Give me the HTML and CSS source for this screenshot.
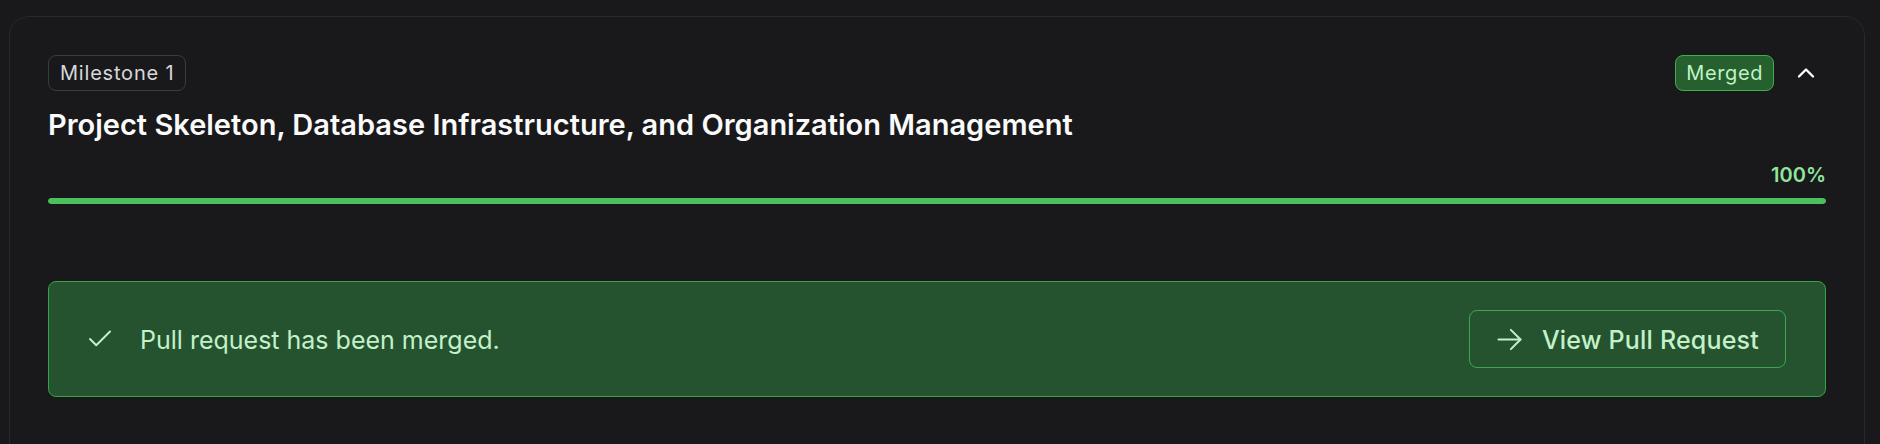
FILE: index.html
```html
<!DOCTYPE html>
<html>
<head>
    <link rel="stylesheet" href="styles.css">
</head>
<body>
    <div class="page">
        <div class="milestone-card">
            <div class="card-header">
                <span class="milestone-tag">Milestone 1</span>
                <div class="header-actions">
                    <span class="status-badge">Merged</span>
                    <button class="collapse-btn" aria-label="Collapse">
                        <svg width="28" height="28" viewBox="0 0 24 24" fill="none" stroke="currentColor" stroke-width="2" stroke-linecap="round" stroke-linejoin="round"><path d="m18 15-6-6-6 6"/></svg>
                    </button>
                </div>
            </div>

            <h2 class="milestone-title">Project Skeleton, Database Infrastructure, and Organization Management</h2>

            <div class="progress">
                <div class="progress-label">100%</div>
                <div class="progress-track">
                    <div class="progress-fill" style="width: 100%;"></div>
                </div>
            </div>

            <div class="merge-notice">
                <div class="merge-info">
                    <svg class="check-icon" width="30" height="30" viewBox="0 0 24 24" fill="none" stroke="currentColor" stroke-width="1.6" stroke-linecap="round" stroke-linejoin="round"><path d="M20 6 9 17l-5-5"/></svg>
                    <span class="merge-text">Pull request has been merged.</span>
                </div>
                <a class="pr-button" href="#">
                    <svg width="33" height="33" viewBox="0 0 24 24" fill="none" stroke="currentColor" stroke-width="1.45" stroke-linecap="round" stroke-linejoin="round"><path d="M4 12h16"/><path d="m13 5 7 7-7 7"/></svg>
                    <span class="pr-label">View Pull Request</span>
                </a>
            </div>
        </div>
    </div>
</body>
</html>
```

FILE: styles.css
```css
* {
    margin: 0;
    padding: 0;
    box-sizing: border-box;
}

body {
    background: #19191b;
    font-family: 'Inter', 'Noto Sans', sans-serif;
    color: #fafafa;
    overflow: hidden;
    height: 100vh;
}

.page {
    padding: 16px 15px 0 9px;
}

.milestone-card {
    background: #19191b;
    border: 1px solid #29292c;
    border-radius: 20px;
    padding: 38px 38px 80px;
}

.card-header {
    display: flex;
    justify-content: space-between;
    align-items: center;
}

.milestone-tag {
    display: inline-block;
    height: 36px;
    line-height: 34px;
    padding: 0 11px;
    border: 1px solid #3c3c40;
    border-radius: 8px;
    font-size: 20px;
    letter-spacing: 0.8px;
    color: #d8d8dc;
}

.header-actions {
    display: flex;
    align-items: center;
    gap: 12px;
}

.status-badge {
    display: inline-block;
    height: 36px;
    line-height: 34px;
    padding: 0 10px;
    background: #27602f;
    border: 1px solid #3fae4f;
    border-radius: 8px;
    font-size: 20px;
    letter-spacing: 0.6px;
    color: #bff3c6;
}

.collapse-btn {
    width: 40px;
    height: 36px;
    display: flex;
    align-items: center;
    justify-content: center;
    background: none;
    border: none;
    color: #ffffff;
    cursor: pointer;
}

.milestone-title {
    margin-top: 16px;
    font-size: 29px;
    line-height: 36px;
    font-weight: 600;
    color: #fafafa;
}

.progress {
    margin-top: 18px;
}

.progress-label {
    text-align: right;
    font-size: 20px;
    line-height: 28px;
    font-weight: 600;
    color: #8fe59c;
}

.progress-track {
    margin-top: 9px;
    height: 6px;
    border-radius: 3px;
    background: #2a2a2d;
    overflow: hidden;
}

.progress-fill {
    height: 100%;
    border-radius: 3px;
    background: #4cc05c;
}

.merge-notice {
    margin-top: 77px;
    display: flex;
    justify-content: space-between;
    align-items: center;
    padding: 28px 39px 28px 36px;
    background: #25532f;
    border: 1px solid #36a347;
    border-radius: 8px;
}

.merge-info {
    display: flex;
    align-items: center;
    gap: 25px;
    font-size: 25px;
    color: #c3f1c9;
}

.merge-text,
.pr-label {
    padding-top: 2px;
}

.check-icon {
    color: #c3f1c9;
}

.pr-button {
    display: flex;
    align-items: center;
    gap: 16px;
    height: 58px;
    padding: 0 26px 0 23px;
    border: 1px solid #3aa84b;
    border-radius: 8px;
    font-size: 25px;
    font-weight: 500;
    letter-spacing: 0.2px;
    color: #c3f1c9;
    text-decoration: none;
}
```
